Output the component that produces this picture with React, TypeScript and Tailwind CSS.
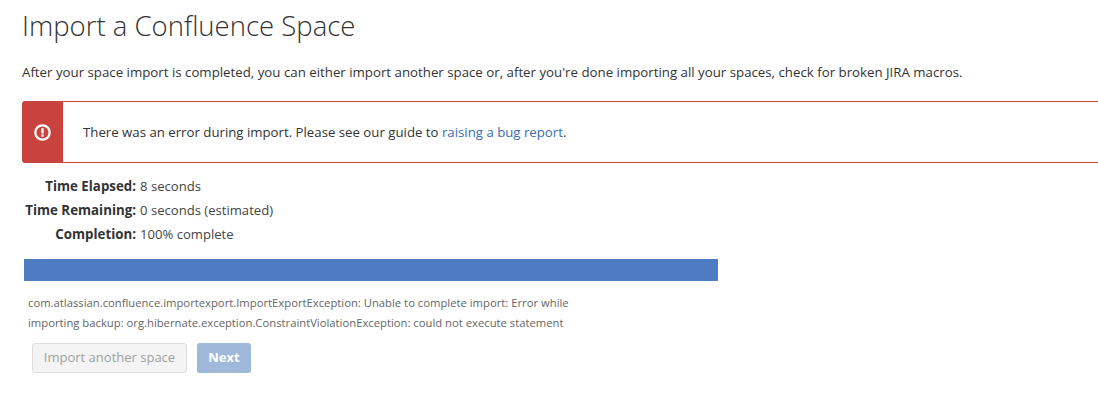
import React from 'react';

const font = "font-['Open_Sans','Liberation_Sans',sans-serif]";

const StatRow: React.FC<{ label: string; value: string }> = ({ label, value }) => (
    <div className="flex h-6 items-center text-[13.1px] text-[#333333]">
        <span className="w-[114px] text-right text-[13.3px] font-bold">{label}:</span>
        <span className="ml-[4px] text-[#444444]">{value}</span>
    </div>
);

const App: React.FC = () => (
    <div className={`${font} h-[403px] w-[1098px] overflow-hidden bg-white pl-[22px]`}>
        <h1 className="pt-[10px] text-[27.5px] leading-[32px] font-light text-[#333333]">Import a Confluence Space</h1>
        <p className="mt-[20px] text-[13.27px] leading-[20px] text-[#333333]">
            After your space import is completed, you can either import another space or, after you're done importing all your spaces, check for broken JIRA macros.
        </p>
        <div className="mt-[19px] flex h-[62px] items-stretch">
            <div className="flex w-[41px] shrink-0 items-center justify-center rounded-l-[3px] bg-[#c9423d]">
                <svg width="17" height="17" viewBox="0 0 18 18" fill="none">
                    <circle cx="9" cy="9" r="7.6" stroke="white" strokeWidth="2.4" />
                    <rect x="7.75" y="4.5" width="2.5" height="5.5" fill="white" />
                    <rect x="7.75" y="11" width="2.5" height="2.5" fill="white" />
                </svg>
            </div>
            <div className="flex flex-1 items-center border-y border-[#c9423d] pl-[20px] text-[13.22px] text-[#333333]">
                <span className="pt-[1px]">
                    There was an error during import. Please see our guide to <a className="text-[#3b6cb5]">raising a bug report</a>.
                </span>
            </div>
        </div>
        <div className="mt-[12px]">
            <StatRow label="Time Elapsed" value="8 seconds" />
            <StatRow label="Time Remaining" value="0 seconds (estimated)" />
            <StatRow label="Completion" value="100% complete" />
        </div>
        <div className="mt-[12px] ml-[2px] h-[22px] w-[694px] bg-[#4e7cc2]" />
        <div className="mt-[12px] ml-[6px] w-[560px] text-[11.27px] leading-[20px] text-[#666666]">
            com.atlassian.confluence.importexport.ImportExportException: Unable to complete import: Error while importing backup: org.hibernate.exception.ConstraintViolationException: could not execute statement
        </div>
        <div className="mt-[10px] ml-[10px] flex gap-[10px]">
            <button className="h-[30px] w-[155px] rounded-[3px] border border-[#dddddd] bg-[#f4f4f4] text-[13px] text-[#a0a0a0]">Import another space</button>
            <button className="h-[30px] w-[54px] rounded-[3px] bg-[#a0b8d9] text-[13px] font-bold text-white">Next</button>
        </div>
    </div>
);

export default App;
